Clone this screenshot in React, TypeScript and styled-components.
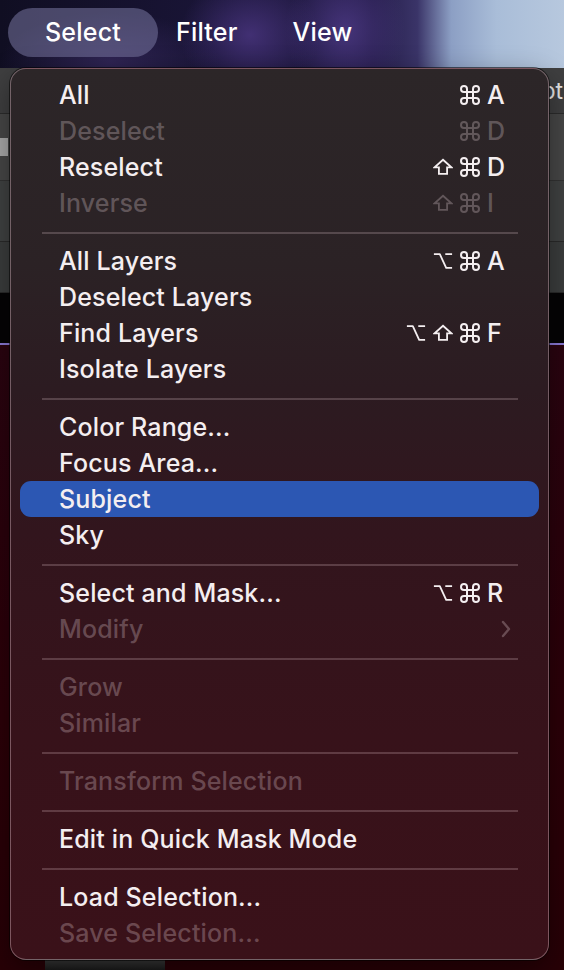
import React from "react"
import styled, { createGlobalStyle } from "styled-components"

type Key = "cmd" | "shift" | "opt"

interface iItem {
  label: string
  disabled?: boolean
  active?: boolean
  keys?: Key[]
  letter?: string
  submenu?: boolean
}

const sections: iItem[][] = [
  [
    { label: "All", keys: ["cmd"], letter: "A" },
    { label: "Deselect", disabled: true, keys: ["cmd"], letter: "D" },
    { label: "Reselect", keys: ["shift", "cmd"], letter: "D" },
    { label: "Inverse", disabled: true, keys: ["shift", "cmd"], letter: "I" },
  ],
  [
    { label: "All Layers", keys: ["opt", "cmd"], letter: "A" },
    { label: "Deselect Layers" },
    { label: "Find Layers", keys: ["opt", "shift", "cmd"], letter: "F" },
    { label: "Isolate Layers" },
  ],
  [
    { label: "Color Range..." },
    { label: "Focus Area..." },
    { label: "Subject", active: true },
    { label: "Sky" },
  ],
  [
    { label: "Select and Mask...", keys: ["opt", "cmd"], letter: "R" },
    { label: "Modify", disabled: true, submenu: true },
  ],
  [
    { label: "Grow", disabled: true },
    { label: "Similar", disabled: true },
  ],
  [{ label: "Transform Selection", disabled: true }],
  [{ label: "Edit in Quick Mask Mode" }],
  [
    { label: "Load Selection..." },
    { label: "Save Selection...", disabled: true },
  ],
]

const KeyIcon = ({ k }: { k: Key }) => {
  if (k === "cmd") {
    return (
      <Glyph viewBox="2 2 20 20">
        <path d="M15 6v12a3 3 0 1 0 3-3H6a3 3 0 1 0 3 3V6a3 3 0 1 0-3 3h12a3 3 0 1 0-3-3" />
      </Glyph>
    )
  }
  if (k === "shift") {
    return (
      <Glyph viewBox="0 0 22 20">
        <path d="M11 2 L20.5 10.5 H15.5 V17.5 H6.5 V10.5 H1.5 Z" strokeLinejoin="miter" />
      </Glyph>
    )
  }
  return (
    <Glyph viewBox="0 0 22 20">
      <path d="M1 2.5h6.5l7 15h6.5M13.5 2.5h7.5" strokeLinecap="butt" />
    </Glyph>
  )
}

const App = () => {
  return (
    <Page>
      <GlobalStyle />
      <MenuBar>
        <BarItem open>Select</BarItem>
        <BarItem>Filter</BarItem>
        <BarItem>View</BarItem>
      </MenuBar>
      <Workspace>
        <Toolbar>
          <ToolText>Opt</ToolText>
        </Toolbar>
        <OptionsRow>
          <Chip />
        </OptionsRow>
        <PanelRow />
        <PanelRow dark />
        <Canvas />
        <Guide />
        <Maroon>
          <Thumb />
        </Maroon>
      </Workspace>

      <Menu>
        {sections.map((sec, si) => (
          <React.Fragment key={si}>
            {si > 0 && <Separator />}
            {sec.map((item) => (
              <Row key={item.label} active={item.active} disabled={item.disabled}>
                <Label>{item.label}</Label>
                {item.letter && (
                  <Shortcut>
                    {item.keys?.map((k) => <KeyIcon key={k} k={k} />)}
                    <Letter>{item.letter}</Letter>
                  </Shortcut>
                )}
                {item.submenu && (
                  <Chevron viewBox="0 0 10 18">
                    <path d="M2 2l6 7-6 7" />
                  </Chevron>
                )}
              </Row>
            ))}
          </React.Fragment>
        ))}
      </Menu>
    </Page>
  )
}

export default App

const GlobalStyle = createGlobalStyle`
  html, body { margin: 0; padding: 0; background: #1a0006; }
  body { font-family: Inter, "Noto Sans", sans-serif; -webkit-font-smoothing: antialiased; }
`

const Page = styled.div`
  position: relative;
  width: 564px;
  height: 970px;
  overflow: hidden;
`

const MenuBar = styled.div`
  height: 68px;
  display: flex;
  align-items: center;
  padding-left: 8px;
  padding-bottom: 4px;
  box-sizing: border-box;
  background:
    radial-gradient(ellipse 70px 60px at 250px 35px, rgba(72,52,125,0.85) 0%, rgba(50,35,90,0) 100%),
    radial-gradient(ellipse 60px 70px at 345px 30px, rgba(78,58,135,0.8) 0%, rgba(50,35,90,0) 100%),
    radial-gradient(ellipse 110px 50px at 110px 62px, rgba(58,44,100,0.7) 0%, rgba(40,30,70,0) 100%),
    linear-gradient(90deg, #100e22 0%, #1a1538 40%, #241c48 66%, #3a3468 74%, #8c9fc4 80%, #a9bdd8 88%, #b7c8de 100%);
`

const BarItem = styled.div<{ open?: boolean }>`
  height: 49px;
  display: flex;
  align-items: center;
  justify-content: center;
  color: #ffffff;
  font-size: 25px;
  font-weight: 500;
  letter-spacing: 0.2px;
  border-radius: 25px;
  width: ${({ open }) => (open ? "150px" : "auto")};
  background: ${({ open }) => (open ? "rgba(120,118,160,0.55)" : "transparent")};
  margin-right: ${({ open }) => (open ? "18px" : "55px")};
`

const Workspace = styled.div`
  height: 902px;
  display: flex;
  flex-direction: column;
`

const Toolbar = styled.div`
  height: 45px;
  background: #3f3f40;
  border-bottom: 1px solid #2c2c2c;
  display: flex;
  justify-content: flex-end;
  align-items: center;
  overflow: hidden;
`

const ToolText = styled.span`
  color: #e6e6e6;
  font-size: 23px;
  margin-right: 1px;
`

const OptionsRow = styled.div`
  height: 66px;
  background: #474747;
  border-bottom: 1px solid #333;
  display: flex;
  align-items: center;
`

const Chip = styled.div`
  width: 8px;
  height: 18px;
  background: #a9a9a9;
`

const PanelRow = styled.div<{ dark?: boolean }>`
  height: ${({ dark }) => (dark ? "50px" : "60px")};
  background: ${({ dark }) => (dark ? "#3b3d3d" : "#404242")};
  border-bottom: 1px solid #2a2a2a;
`

const Canvas = styled.div`
  height: 50px;
  background: #050405;
`

const Guide = styled.div`
  height: 2px;
  background: #8b7ad8;
`

const Maroon = styled.div`
  flex: 1;
  background: linear-gradient(180deg, #2a0410 0%, #2c0008 60%, #280006 100%);
  display: flex;
  align-items: flex-end;
  padding-left: 45px;
`

const Thumb = styled.div`
  width: 120px;
  height: 10px;
  background: linear-gradient(180deg, #3a3a3a, #1a1a1a);
`

const Menu = styled.div`
  position: absolute;
  top: 68px;
  left: 10px;
  width: 539px;
  height: 892px;
  box-sizing: border-box;
  padding: 8px 9px;
  border-radius: 16px;
  border: 1px solid rgba(235, 200, 210, 0.38);
  box-shadow: 0 0 0 1px rgba(0, 0, 0, 0.55), 0 10px 30px rgba(0, 0, 0, 0.4);
  background: linear-gradient(
    180deg,
    #2c2628 0%,
    #2b2225 22%,
    #2c1b21 36%,
    #32151d 52%,
    #37121a 75%,
    #3a1119 100%
  );
  display: flex;
  flex-direction: column;
`

const Row = styled.div<{ active?: boolean; disabled?: boolean }>`
  height: 36px;
  flex-shrink: 0;
  display: flex;
  align-items: center;
  padding-left: 39px;
  padding-right: 34px;
  border-radius: 11px;
  font-size: 25px;
  font-weight: 450;
  letter-spacing: 0.15px;
  background: ${({ active }) => (active ? "#2c57b3" : "transparent")};
  color: ${({ disabled }) => (disabled ? "rgba(255, 235, 240, 0.26)" : "#f4eef0")};
`

const Label = styled.span`
  flex: 1;
  white-space: nowrap;
`

const Shortcut = styled.div`
  display: flex;
  align-items: center;
  gap: 7px;
`

const Glyph = styled.svg`
  width: 20px;
  height: 20px;
  fill: none;
  stroke: currentColor;
  stroke-width: 2;
  stroke-linecap: round;
  stroke-linejoin: round;
`

const Letter = styled.span`
  width: 18px;
  text-align: left;
`

const Chevron = styled.svg`
  width: 10px;
  height: 18px;
  margin-right: -6px;
  fill: none;
  stroke: currentColor;
  stroke-width: 2.4;
  stroke-linecap: round;
  stroke-linejoin: round;
`

const Separator = styled.div`
  height: 22px;
  flex-shrink: 0;
  margin: 0 21px 0 22px;
  background: linear-gradient(
    180deg,
    transparent 11px,
    rgba(255, 225, 232, 0.2) 11px,
    rgba(255, 225, 232, 0.2) 13px,
    transparent 13px
  );
`
